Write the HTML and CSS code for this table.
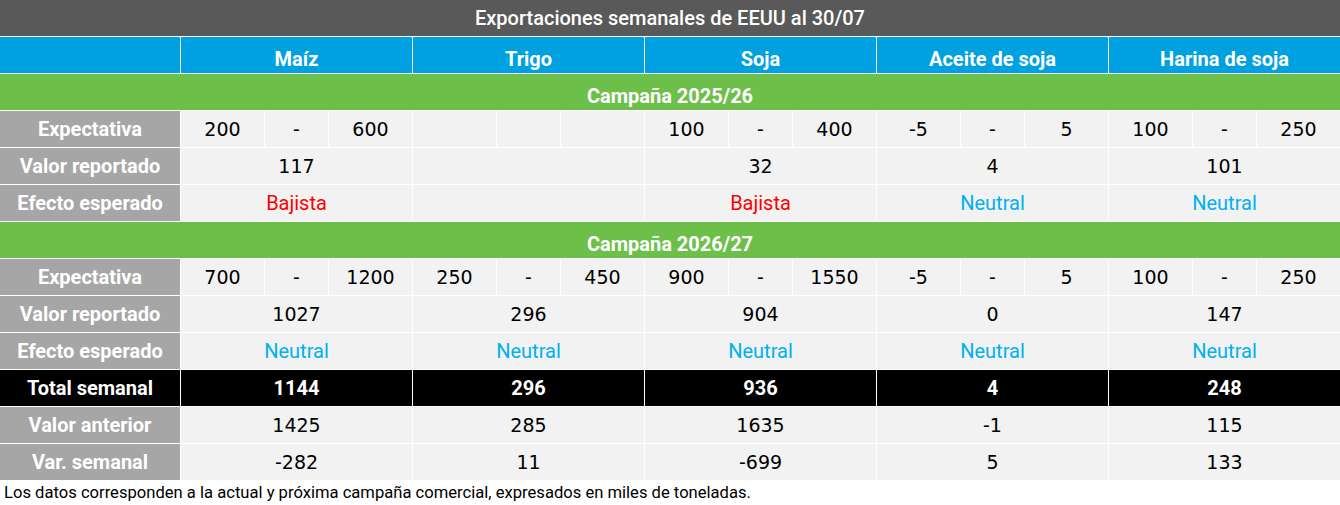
FILE: index.html
```html
<!DOCTYPE html>
<html lang="es">
<head>
<meta charset="utf-8">
<title>Exportaciones semanales de EEUU</title>
<link rel="stylesheet" href="styles.css">
</head>
<body>
<div class="table">
  <div class="title full">Exportaciones semanales de EEUU al 30/07</div>

  <div class="hd"></div>
  <div class="hd span3">Maíz</div>
  <div class="hd span3">Trigo</div>
  <div class="hd span3">Soja</div>
  <div class="hd span3">Aceite de soja</div>
  <div class="hd span3">Harina de soja</div>

  <div class="camp full">Campaña 2025/26</div>

  <div class="lbl">Expectativa</div>
  <div class="c num">200</div><div class="c num">-</div><div class="c num">600</div>
  <div class="c"></div><div class="c"></div><div class="c"></div>
  <div class="c num">100</div><div class="c num">-</div><div class="c num">400</div>
  <div class="c num">-5</div><div class="c num">-</div><div class="c num">5</div>
  <div class="c num">100</div><div class="c num">-</div><div class="c num">250</div>

  <div class="lbl">Valor reportado</div>
  <div class="c num span3">117</div>
  <div class="c span3"></div>
  <div class="c num span3">32</div>
  <div class="c num span3">4</div>
  <div class="c num span3">101</div>

  <div class="lbl">Efecto esperado</div>
  <div class="c eff down span3">Bajista</div>
  <div class="c span3"></div>
  <div class="c eff down span3">Bajista</div>
  <div class="c eff neu span3">Neutral</div>
  <div class="c eff neu span3">Neutral</div>

  <div class="camp full">Campaña 2026/27</div>

  <div class="lbl">Expectativa</div>
  <div class="c num">700</div><div class="c num">-</div><div class="c num">1200</div>
  <div class="c num">250</div><div class="c num">-</div><div class="c num">450</div>
  <div class="c num">900</div><div class="c num">-</div><div class="c num">1550</div>
  <div class="c num">-5</div><div class="c num">-</div><div class="c num">5</div>
  <div class="c num">100</div><div class="c num">-</div><div class="c num">250</div>

  <div class="lbl">Valor reportado</div>
  <div class="c num span3">1027</div>
  <div class="c num span3">296</div>
  <div class="c num span3">904</div>
  <div class="c num span3">0</div>
  <div class="c num span3">147</div>

  <div class="lbl">Efecto esperado</div>
  <div class="c eff neu span3">Neutral</div>
  <div class="c eff neu span3">Neutral</div>
  <div class="c eff neu span3">Neutral</div>
  <div class="c eff neu span3">Neutral</div>
  <div class="c eff neu span3">Neutral</div>

  <div class="tot">Total semanal</div>
  <div class="tot span3">1144</div>
  <div class="tot span3">296</div>
  <div class="tot span3">936</div>
  <div class="tot span3">4</div>
  <div class="tot span3">248</div>

  <div class="lbl">Valor anterior</div>
  <div class="c num span3">1425</div>
  <div class="c num span3">285</div>
  <div class="c num span3">1635</div>
  <div class="c num span3">-1</div>
  <div class="c num span3">115</div>

  <div class="lbl">Var. semanal</div>
  <div class="c num span3">-282</div>
  <div class="c num span3">11</div>
  <div class="c num span3">-699</div>
  <div class="c num span3">5</div>
  <div class="c num span3">133</div>
</div>
<p class="note">Los datos corresponden a la actual y próxima campaña comercial, expresados en miles de toneladas.</p>
</body>
</html>
```

FILE: styles.css
```css
html, body {
  margin: 0;
  padding: 0;
  background: #ffffff;
}

body {
  width: 1340px;
  font-family: Roboto, "Liberation Sans", sans-serif;
}

.table {
  display: grid;
  grid-template-columns: 180px 83px 63px 83px 83px 63px 83px 83px 63px 83px 83px 63px 83px 83px 63px 83px;
  grid-auto-rows: 36px;
  column-gap: 1px;
  row-gap: 1px;
  background: #ffffff;
  width: 1340px;
}

.table > div {
  display: flex;
  align-items: center;
  justify-content: center;
  white-space: nowrap;
  font-size: 20px;
  box-sizing: border-box;
}

.full {
  grid-column: 1 / -1;
}

.span3 {
  grid-column: span 3;
}

.title {
  background: #595959;
  color: #ffffff;
  font-weight: 500;
}

.table > .hd,
.table > .camp {
  align-items: flex-end;
  padding-bottom: 2px;
}

.hd {
  background: #00a1e0;
  color: #ffffff;
  font-weight: 700;
}

.camp {
  background: #6cc04a;
  color: #ffffff;
  font-weight: 700;
}

.lbl {
  background: #a6a6a6;
  color: #ffffff;
  font-weight: 700;
}

.c {
  background: #f2f2f2;
  color: #000000;
}

.table > .num {
  font-family: "DejaVu Sans", Verdana, sans-serif;
  font-size: 19px;
}

.down {
  color: #ff0000;
}

.neu {
  color: #00b0f0;
}

.tot {
  background: #000000;
  color: #ffffff;
  font-weight: 700;
}

.note {
  margin: 2px 0 0 4px;
  font-size: 16.6px;
  color: #000000;
  line-height: 22px;
  white-space: nowrap;
}
```
